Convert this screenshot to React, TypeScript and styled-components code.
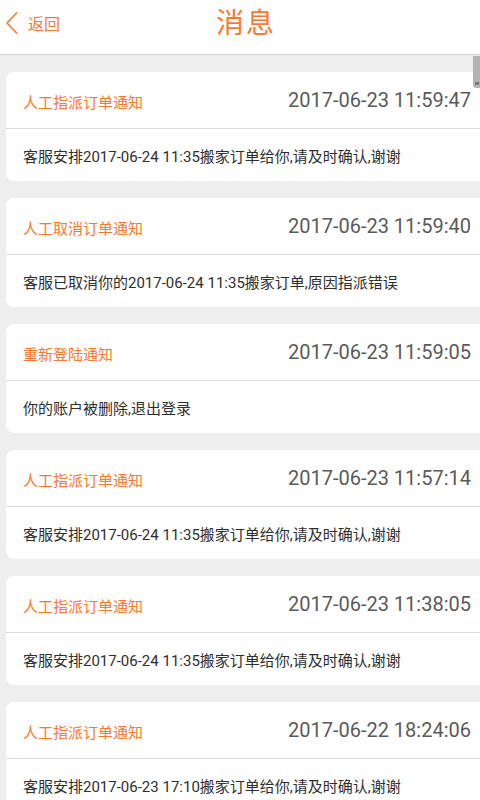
import React from 'react'
import styled, { createGlobalStyle } from 'styled-components'

const GlobalStyle = createGlobalStyle`
  html, body {
    margin: 0;
    padding: 0;
    background: #efeeee;
  }
  body {
    font-family: Roboto, "Noto Sans CJK SC", sans-serif;
  }
`

const orange = '#f8792f'

const messages = [
  {
    title: '人工指派订单通知',
    time: '2017-06-23 11:59:47',
    body: '客服安排2017-06-24 11:35搬家订单给你,请及时确认,谢谢',
  },
  {
    title: '人工取消订单通知',
    time: '2017-06-23 11:59:40',
    body: '客服已取消你的2017-06-24 11:35搬家订单,原因指派错误',
  },
  {
    title: '重新登陆通知',
    time: '2017-06-23 11:59:05',
    body: '你的账户被删除,退出登录',
  },
  {
    title: '人工指派订单通知',
    time: '2017-06-23 11:57:14',
    body: '客服安排2017-06-24 11:35搬家订单给你,请及时确认,谢谢',
  },
  {
    title: '人工指派订单通知',
    time: '2017-06-23 11:38:05',
    body: '客服安排2017-06-24 11:35搬家订单给你,请及时确认,谢谢',
  },
  {
    title: '人工指派订单通知',
    time: '2017-06-22 18:24:06',
    body: '客服安排2017-06-23 17:10搬家订单给你,请及时确认,谢谢',
  },
]

const Page = styled.div`
  position: relative;
  width: 480px;
  height: 800px;
  overflow: hidden;
  background: #efeeee;
`

const Header = styled.header`
  position: relative;
  display: flex;
  align-items: center;
  justify-content: center;
  height: 54px;
  background: #fff;
  border-bottom: 1px solid #d2d2d2;
`

const BackButton = styled.button`
  position: absolute;
  left: 5px;
  top: 11px;
  display: flex;
  align-items: center;
  gap: 9px;
  padding: 0;
  border: 0;
  background: none;
  color: ${orange};
  font-family: "Noto Sans CJK SC", sans-serif;
  font-size: 16px;
  cursor: pointer;

  svg {
    width: 14px;
    height: 24px;
  }
`

const Title = styled.h1`
  margin: -12px 0 0 12px;
  color: ${orange};
  font-family: "Noto Sans CJK SC", sans-serif;
  font-size: 28px;
  font-weight: 400;
  letter-spacing: 2px;
`

const List = styled.div`
  display: flex;
  flex-direction: column;
  gap: 17px;
  padding: 17px 0 0 6px;
`

const Card = styled.div`
  margin-right: -8px;
  background: #fff;
  border-radius: 8px;
`

const CardHead = styled.div`
  display: flex;
  align-items: center;
  justify-content: space-between;
  height: 56px;
  padding: 0 17px;
  border-bottom: 1px solid #dcdcdc;
`

const CardTitle = styled.span`
  color: ${orange};
  font-family: "Noto Sans CJK SC", sans-serif;
  font-size: 15px;
  margin-top: 2px;
`

const CardTime = styled.span`
  color: #5a5a5a;
  font-family: Roboto, sans-serif;
  font-size: 20px;
`

const CardBody = styled.div`
  display: flex;
  align-items: center;
  height: 52px;
  padding: 0 17px;
  color: #2e2e2e;
  font-family: Roboto, "Noto Sans CJK SC", sans-serif;
  font-size: 15px;
`

const ScrollThumb = styled.div`
  position: absolute;
  right: 0;
  top: 56px;
  width: 7px;
  height: 32px;
  background: #b4b4b4;
  border-bottom-left-radius: 3px;

  &::after {
    content: '';
    position: absolute;
    left: 2px;
    bottom: 3px;
    width: 4px;
    height: 3px;
    background: #777;
  }
`

const ChevronLeft = () => (
  <svg viewBox="0 0 14 24" fill="none">
    <path d="M12 1.5 L2 12 L12 22.5" stroke={orange} strokeWidth="1.6" />
  </svg>
)

export default function App() {
  return (
    <>
      <GlobalStyle />
      <Page>
        <Header>
          <BackButton>
            <ChevronLeft />
            返回
          </BackButton>
          <Title>消息</Title>
        </Header>
        <List>
          {messages.map((m, i) => (
            <Card key={i}>
              <CardHead>
                <CardTitle>{m.title}</CardTitle>
                <CardTime>{m.time}</CardTime>
              </CardHead>
              <CardBody>{m.body}</CardBody>
            </Card>
          ))}
        </List>
        <ScrollThumb />
      </Page>
    </>
  )
}
